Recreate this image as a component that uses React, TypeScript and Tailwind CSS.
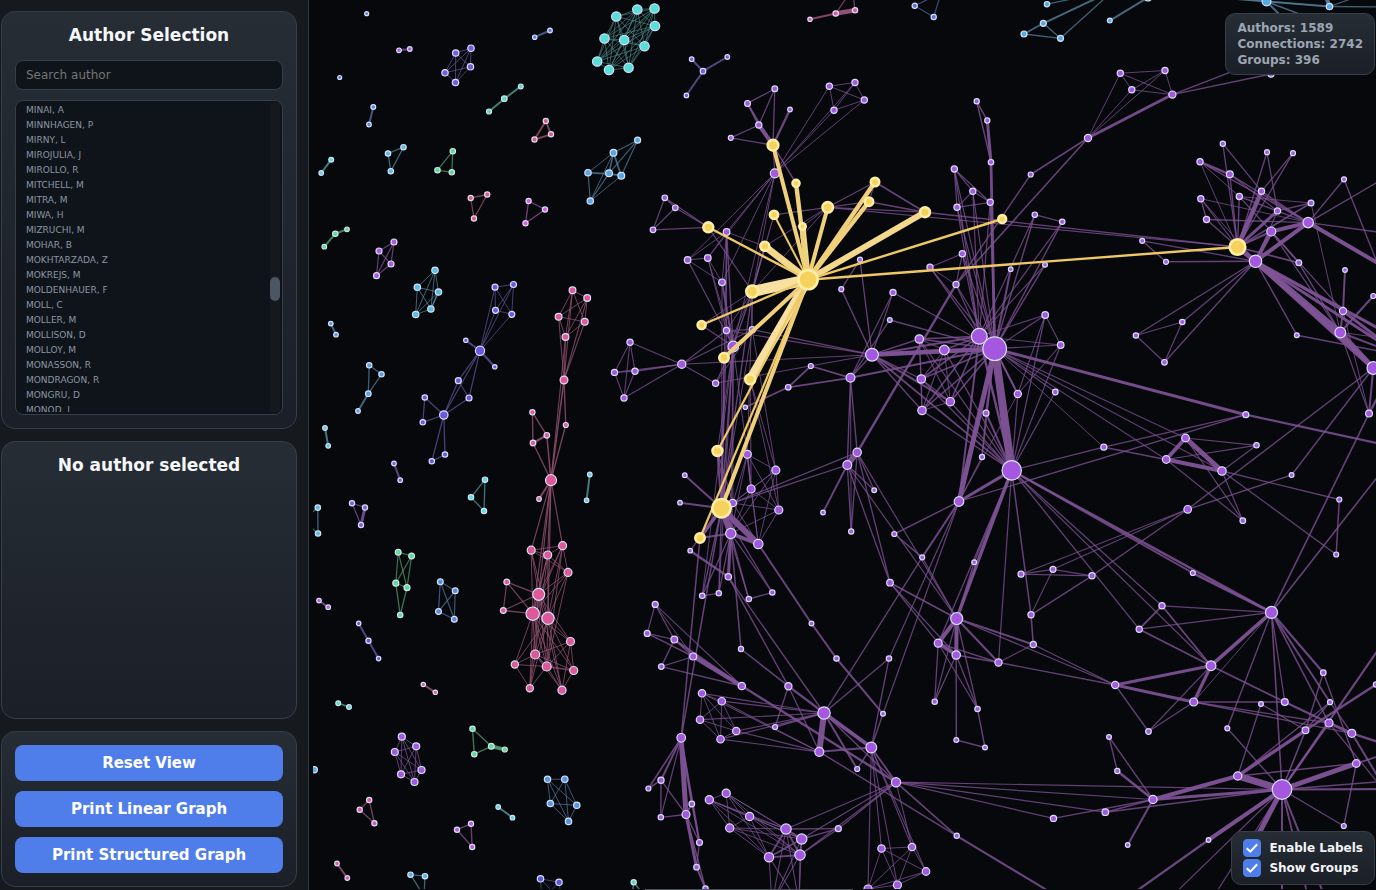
import { useEffect, useRef, useState } from 'react'

type GraphNode = [x: number, y: number, r: number]
type GraphLink = [from: number, to: number, width?: number]
type Group = { hue: number; nodes: GraphNode[]; links: GraphLink[] }

const ROW_HEIGHT = 15
const TOTAL_AUTHORS = 1589
const FIRST_ROW = 960
const THUMB_HEIGHT = 24

const authors = [
  'MINAI, A', 'MINNHAGEN, P', 'MIRNY, L', 'MIROJULIA, J', 'MIROLLO, R', 'MITCHELL, M', 'MITRA, M',
  'MIWA, H', 'MIZRUCHI, M', 'MOHAR, B', 'MOKHTARZADA, Z', 'MOKREJS, M', 'MOLDENHAUER, F', 'MOLL, C',
  'MOLLER, M', 'MOLLISON, D', 'MOLLOY, M', 'MONASSON, R', 'MONDRAGON, R', 'MONGRU, D', 'MONOD, J',
]

// every node of the list linked with every other one
const mesh = (ids: number[], width = 1): GraphLink[] =>
  ids.flatMap((a, i) => ids.slice(i + 1).map((b): GraphLink => [a, b, width]))

// every node of the first list linked with every node of the second one
const cross = (from: number[], to: number[], width = 1): GraphLink[] =>
  from.flatMap((a) => to.map((b): GraphLink => [a, b, width]))

const range = (from: number, to: number) => Array.from({ length: to - from + 1 }, (_, i) => from + i)

const smallGroups: Group[] = [
  { hue: 220, nodes: [[366.7, 13.7, 2]], links: [] },
  { hue: 225, nodes: [[339.7, 77.5, 2]], links: [] },
  { hue: 280, nodes: [[399, 50.3, 2.3], [409.8, 49, 2.3]], links: [[0, 1, 2]] },
  { hue: 222, nodes: [[534.7, 37.2, 2.2], [550, 30.5, 2.3]], links: [[0, 1, 2]] },
  { hue: 255, nodes: [[455.7, 53, 3.2], [471, 48.2, 3.2], [470.5, 66.8, 3.2], [445, 72.8, 3.2], [455.5, 82.5, 3.2]], links: mesh(range(0, 4)) },
  { hue: 220, nodes: [[373.3, 107, 2.4], [369, 124.5, 2.3]], links: [[0, 1, 2]] },
  { hue: 162, nodes: [[489, 111.5, 2.5], [504.3, 98.7, 2.8], [520.8, 86.4, 2.4]], links: [[0, 1, 2], [1, 2, 2]] },
  { hue: 342, nodes: [[545.8, 121, 2.6], [551, 134.3, 2.6], [534.5, 139.5, 2.6]], links: mesh([0, 1, 2], 1.9) },
  { hue: 182, nodes: [[331.2, 159.7, 2.4], [321.2, 173, 2.3]], links: [[0, 1, 2]] },
  { hue: 195, nodes: [[388, 153.5, 2.7], [403.5, 147.2, 2.7], [390.8, 171.2, 2.7]], links: mesh([0, 1, 2], 1.3) },
  { hue: 140, nodes: [[452.8, 151.2, 2.7], [437.5, 170.2, 2.7], [451.8, 172.3, 2.7]], links: mesh([0, 1, 2], 1.3) },
  { hue: 345, nodes: [[470.7, 198, 2.6], [487.2, 194.5, 2.6], [474, 218.5, 2.6]], links: mesh([0, 1, 2], 1.3) },
  { hue: 302, nodes: [[528.6, 201, 2.6], [545, 209.5, 2.6], [525.5, 223.3, 2.6]], links: mesh([0, 1, 2], 1.3) },
  { hue: 140, nodes: [[324.3, 246.7, 2.3], [335.3, 233.8, 2.7], [347, 229.3, 2.3]], links: [[0, 1, 2], [1, 2, 2]] },
  { hue: 280, nodes: [[379, 251, 3], [394, 242, 3], [391, 264, 3], [376.5, 275.7, 3]], links: mesh(range(0, 3), 1.2) },
  { hue: 195, nodes: [[435, 270.3, 3.2], [417.3, 287.3, 3.2], [438.5, 292, 3.2], [415.7, 314.5, 3.2], [430.9, 309, 3.2]], links: [...mesh(range(0, 4)), [2, 4, 1.6]] },
  {
    hue: 248,
    nodes: [
      [495, 287.2, 3], [513.5, 284.5, 3], [495.5, 310.3, 3], [511.8, 314.3, 3], [480, 350.7, 4.6], [465.8, 340.3, 2.2], [494.8, 366.8, 2.2],
      [458.3, 380.7, 3], [469, 398, 3], [443.8, 415, 4.2], [424.8, 397.5, 2.7], [422.8, 422.3, 2.7], [431.8, 461.3, 2.7], [445, 454.5, 2.7],
    ],
    links: [
      ...mesh(range(0, 3)), ...cross([4], [0, 1, 2, 3]), [4, 5, 2], [4, 6, 2], [4, 7, 1.2], [4, 8, 1.2], [4, 9, 1.2], [7, 8, 1.2],
      [7, 9, 1.2], [8, 9, 1.2], [9, 10, 1.3], [9, 11, 1.3], [10, 11, 1.3], [9, 12, 1.3], [9, 13, 1.3], [12, 13, 1.3],
    ],
  },
  { hue: 210, nodes: [[330.8, 323.6, 2.3], [336, 334.7, 2.3]], links: [[0, 1, 2]] },
  { hue: 208, nodes: [[369.2, 365.3, 2.7], [381.5, 374.3, 2.7], [368.3, 393.7, 2.8], [358, 411, 2.3]], links: [[0, 1, 1.3], [0, 2, 1.3], [1, 2, 1.3], [2, 3, 2]] },
  { hue: 188, nodes: [[325, 428, 2.3], [328.2, 445.8, 2.3]], links: [[0, 1, 2]] },
  { hue: 262, nodes: [[394, 463.5, 2.3], [400.2, 480.2, 2.3]], links: [[0, 1, 2]] },
  { hue: 180, nodes: [[485, 479.7, 2.7], [471, 497.3, 2.7], [484, 511, 2.7]], links: mesh([0, 1, 2], 1.3) },
  { hue: 265, nodes: [[352, 503.2, 2.6], [365, 507.5, 2.6], [361, 525, 2.6]], links: [[0, 1, 1.3], [0, 2, 1.3], [1, 2, 3]] },
  { hue: 195, nodes: [[317.8, 507.6, 2.7], [318, 533.5, 2.7], [303, 520, 2.7]], links: mesh([0, 1, 2], 1.3) },
  { hue: 185, nodes: [[589.8, 474.5, 2.3], [586.6, 500.3, 2.3]], links: [[0, 1, 2]] },
  { hue: 142, nodes: [[398.2, 552.2, 2.9], [411.6, 556, 2.9], [395.8, 583.2, 3], [407, 587.7, 3], [400.2, 615, 2.7]], links: [...mesh(range(0, 3), 1.2), [2, 4, 1.3], [3, 4, 1.3]] },
  { hue: 218, nodes: [[440.3, 581.7, 2.9], [455.2, 590.8, 2.9], [438.5, 611.5, 2.9], [454.3, 619.3, 2.9]], links: mesh(range(0, 3), 1.2) },
  { hue: 290, nodes: [[319, 600.6, 2.3], [328.2, 607.2, 2.3]], links: [[0, 1, 2]] },
  { hue: 250, nodes: [[358.7, 623.4, 2.2], [368.5, 640.7, 2.6], [378.6, 658.6, 2.2]], links: [[0, 1, 2], [1, 2, 2]] },
  { hue: 330, nodes: [[423.3, 684.5, 2.2], [435.3, 692.3, 2.2]], links: [[0, 1, 2]] },
  { hue: 165, nodes: [[338.2, 703.2, 2.4], [349, 707, 2.4]], links: [[0, 1, 1.8]] },
  { hue: 142, nodes: [[472.5, 728.8, 2.7], [474.3, 754.2, 2.7], [491.3, 746.3, 2.9], [504.8, 749.5, 2.5]], links: [[0, 1, 1.4], [0, 2, 1.4], [1, 2, 1.4], [2, 3, 3.8]] },
  { hue: 275, nodes: [[401.8, 736.7, 3.5], [416.2, 746.3, 3.5], [394.8, 752, 3.5], [421.5, 770, 3.5], [401, 774.3, 3.5], [414.5, 782, 3.5]], links: mesh(range(0, 5)) },
  { hue: 200, nodes: [[314.3, 769.7, 3.1]], links: [] },
  { hue: 325, nodes: [[369.2, 800, 2.6], [359.7, 809.8, 2.6], [374.4, 823.2, 2.6]], links: mesh([0, 1, 2], 1.3) },
  { hue: 288, nodes: [[471, 823.8, 2.6], [457, 829.7, 2.6], [472.2, 847, 2.6]], links: mesh([0, 1, 2], 1.3) },
  { hue: 185, nodes: [[498.2, 807, 2.3], [512.5, 817.7, 2.3]], links: [[0, 1, 2]] },
  { hue: 212, nodes: [[547.5, 779.3, 3.2], [564.8, 779.2, 3.2], [550.3, 803.5, 3.2], [576.8, 805.3, 3.2], [568.5, 821.4, 3.2]], links: mesh(range(0, 4)) },
  { hue: 330, nodes: [[337, 863.5, 2.3], [347.3, 878, 2.3]], links: [[0, 1, 2]] },
  { hue: 200, nodes: [[410.5, 874.7, 2.7], [425, 876.2, 2.7], [424, 896, 2.7]], links: mesh([0, 1, 2], 1.3) },
  { hue: 240, nodes: [[540.5, 878.8, 3.2], [559, 882.3, 3.2], [542, 900, 3.2], [562, 902, 3.2]], links: mesh(range(0, 3)) },
  { hue: 160, nodes: [[633.7, 882.3, 2.6], [632, 897, 2.6], [643, 894, 2.6]], links: mesh([0, 1, 2], 1.4) },
  {
    hue: 177,
    nodes: [
      [616.3, 16.5, 4.7], [637.3, 9.5, 4.7], [654.5, 8.5, 4.7], [655, 26, 4.7], [604.5, 38.5, 4.7],
      [624.2, 40, 4.7], [644.5, 46.3, 4.7], [597.2, 61.5, 4.7], [609, 70, 4.7], [628.6, 67.8, 4.7],
    ],
    links: mesh(range(0, 9), 0.8),
  },
  {
    hue: 205,
    nodes: [[613.5, 152.7, 3.4], [637.6, 140.2, 3], [588, 172.7, 3.2], [609, 173.3, 3.4], [621.3, 175.7, 3.4], [590.3, 201, 3.2]],
    links: [[0, 1, 1.2], [0, 2], [0, 3, 1.6], [0, 4, 1.8], [0, 5], [1, 3, 1.2], [1, 4, 1.2], [2, 3, 1.2], [2, 4], [2, 5, 1.2], [3, 4, 1.6], [3, 5, 1.2], [4, 5]],
  },
  { hue: 255, nodes: [[703, 71.2, 2.8], [691.7, 59.2, 2.3], [727.3, 57, 2.3], [686.4, 95.4, 2.3]], links: cross([0], [1, 2, 3], 2) },
  { hue: 325, nodes: [[810, 19.3, 2.2], [835.7, 13.5, 2.7], [855, 10.3, 2.7], [852.5, -11, 2.7]], links: [[0, 1, 2], [1, 2, 4.5], [1, 3, 1.3], [2, 3, 1.3]] },
  { hue: 228, nodes: [[914.7, 5.8, 2.6], [933.7, 17, 2.6], [941, -7, 2.6]], links: mesh([0, 1, 2], 1.2) },
  {
    hue: 203,
    nodes: [
      [1047, 4.2, 2.7], [1043.3, 23.3, 3], [1024, 34, 3], [1060.5, 38.3, 3], [1109.8, 20.6, 2.4], [1148, -2.5, 3.5], [1266.5, 1.5, 4.4],
      [1329.5, 6.5, 3.2], [1114, -10, 3], [1190, -5, 3], [1290, 25, 3], [1310, 18, 3], [1400, 7, 3], [1324, -9, 3], [1362, -5, 3],
    ],
    links: [
      [0, 8, 1.3], [1, 8, 2], [1, 2, 1.8], [1, 3, 1.3], [2, 3, 1.3], [3, 8, 1.3], [4, 5, 2], [6, 9, 2], [6, 7, 2], [6, 10, 2],
      [6, 11, 1.5], [7, 12, 1.3], [7, 13, 4], [7, 14, 1.2], [7, 9, 1.2],
    ],
  },
  {
    hue: 331,
    nodes: [
      [572.5, 290.3, 3.4], [587.2, 298, 3.4], [558.6, 316.7, 3.4], [584.8, 321.8, 3.4], [565.5, 337, 3.4], [564, 380, 3.9], [565.8, 425, 2.5],
      [532.4, 412.3, 2.6], [546.8, 435.3, 2.8], [533, 443, 2.8], [551, 480.2, 5.5], [539, 499, 2.3], [531.2, 550.2, 4], [547.7, 555, 4],
      [562.6, 545.7, 4], [568, 572.4, 4], [538.7, 594.3, 6], [532.7, 613.7, 6.7], [548, 618.3, 6.1], [506.8, 582, 2.9], [503.3, 610.5, 2.9],
      [570.5, 641.5, 4], [535.2, 654.5, 4.5], [546.7, 666.5, 4.5], [514.8, 664.5, 3.6], [573.7, 670.5, 4], [529.8, 688.3, 3.6], [562, 690.3, 4.1],
    ],
    links: [
      ...mesh(range(0, 4)), ...cross([5], [0, 1, 2, 3, 4], 1.1), [5, 10, 1.6], [4, 10, 1.1], [5, 6, 1.4], [6, 10, 1.4], [7, 8, 1.4], [7, 9, 1.4],
      [8, 9, 2.2], [8, 10, 1.6], [9, 10, 1.4], [10, 11, 2], ...cross([10], [12, 13, 14, 16, 17, 18], 1.2), ...mesh(range(12, 18)),
      [19, 16, 1.3], [19, 17, 1.2], [19, 20, 1.2], [20, 16, 1.2], [20, 17, 1.3], ...cross([16, 17, 18], [22, 23, 27]),
      ...cross([17, 18], [21, 24, 25, 26]), [21, 22], [21, 25], [22, 23, 1.4], [22, 24], [23, 24], [23, 25, 1.3], [24, 26], [25, 27],
      [26, 22], [26, 23], [21, 23], [22, 25], [22, 27], [23, 27], [15, 23], [21, 27], [16, 26], [16, 21], [13, 22], [14, 23],
    ],
  },
]

const mainNodes: GraphNode[] = [
  // 0
  [774.8, 88.8, 2.9], [747.5, 103.4, 2.9], [790, 109.5, 2.3], [758.8, 125, 3.1], [730.8, 137.8, 2.5],
  [829.3, 86.2, 3.1], [855, 82.5, 3.1], [864.3, 100, 3.1], [834, 110.2, 3.1], [774.8, 173.3, 4.5],
  // 10
  [664.8, 197.8, 2.8], [675.3, 207.8, 2.8], [653, 229.8, 2.8], [726.6, 232, 3.3], [687.6, 260, 3.3],
  [707.8, 258, 3.3], [722, 282.3, 3.3], [860, 259.7, 2.5], [841.3, 289.2, 2.5], [893, 292.4, 3.1],
  // 20
  [930, 267.3, 3.1], [962.3, 253.8, 3.1], [956, 284.5, 3.1], [976.7, 101.3, 2.6], [987.3, 120.5, 2.6],
  [991, 162.2, 2.7], [954.3, 169, 3.1], [972.8, 191.2, 3.1], [957, 207.3, 3.1], [990.2, 202.3, 3.1],
  // 30
  [1120.3, 73.2, 3.1], [1165, 70.5, 3.1], [1131.8, 89.8, 3.1], [1172.4, 94.6, 3.6], [1088, 138, 3.6],
  [1030.7, 174.5, 2.5], [1034.8, 214.7, 2.7], [1062.2, 221.8, 2.7], [1010.7, 269.2, 2.3], [1045, 264.8, 2.4],
  // 40
  [1142.2, 240.8, 2.5], [1166, 261.8, 2.5], [1222.8, 143.7, 2.6], [1200, 161.8, 3.1], [1229.8, 174.3, 3.4],
  [1267, 152.2, 2.5], [1293, 153.2, 2.5], [1200.8, 198.7, 3.1], [1239.3, 196.5, 3.1], [1261.5, 191.3, 3.1],
  // 50
  [1206.5, 219.5, 3.1], [1277.5, 210.9, 3.1], [1311, 203, 2.9], [1271.3, 231.5, 4.5], [1308.2, 222.6, 5.2],
  [1298.8, 262.8, 2.9], [1255.5, 261.3, 6.2], [1344, 179.3, 2.5], [1345, 270, 2.3], [1373.3, 296, 2.5],
  // 60
  [1271, 74, 3.1], [630, 342.2, 3.1], [614.5, 372.4, 3.1], [635, 371.2, 3.1], [624, 398, 3.1],
  [681.8, 364.3, 4.1], [726.4, 330.5, 3.1], [752.3, 329.7, 3.1], [733.2, 346.5, 5.3], [715.6, 383.3, 3.1],
  // 70
  [745.3, 407.3, 2.2], [788.2, 387.3, 2.8], [810.8, 366, 2.5], [850.5, 377.8, 4.4], [872, 354.7, 6.4],
  [889.8, 320, 2.4], [919.3, 339, 4.2], [944.3, 350, 4.8], [921.3, 379, 4.2], [922, 410.5, 4.2],
  // 80
  [950.3, 401.7, 4.2], [979.3, 336.3, 7.9], [994.7, 348.7, 11.8], [986, 413.2, 3], [982, 457, 2.6],
  [857.2, 452.3, 4.2], [847.3, 465, 4.4], [874.2, 490.3, 2.4], [823, 512.5, 2.3], [851.2, 531.5, 2.6],
  // 90
  [747.3, 454.3, 4], [775.8, 470.2, 4], [751.1, 489, 4], [778.8, 510, 4], [732.8, 503, 3.7],
  [730.8, 533.5, 5.1], [758.3, 544, 4.7], [684.8, 475.2, 2.3], [680, 502.7, 2.3], [690.2, 550.7, 2.3],
  // 100
  [728.3, 576.8, 3.2], [702.2, 595.8, 2.7], [718.8, 593.3, 2.7], [748.8, 599, 2.7], [772.3, 592.5, 2.7],
  [959, 501.5, 4.8], [894.3, 534, 2.5], [922.2, 557.3, 2.5], [890, 582.7, 3.3], [974.2, 562.3, 2.4],
  // 110
  [1045.2, 315, 3.3], [1060.7, 345, 3.3], [1017.8, 394, 3.6], [1055.3, 392, 2.8], [1011.7, 470.4, 9.7],
  [1103.8, 447.2, 3], [1135.9, 335.5, 2.7], [1182.3, 322, 2.7], [1164.5, 362.3, 2.8], [1296.8, 335.2, 2.4],
  // 120
  [1343, 311, 3.6], [1340.3, 332.5, 5.4], [1373.3, 368, 6.3], [1369, 413.6, 3.4], [1245.8, 414.7, 3],
  [1185.5, 438, 3.8], [1166.2, 459.5, 3.8], [1222, 471, 4.2], [1256.5, 445.3, 2.7], [1291.6, 475, 2.4],
  // 130
  [1187.7, 509.3, 3.8], [1242.8, 520.7, 2.8], [1339.3, 499.5, 2.5], [1336.2, 554.5, 2.5], [1021, 574.2, 3],
  [1053, 569.3, 3], [1092, 575.8, 3.1], [1192.8, 573, 2.5], [655.2, 604.4, 3], [647.2, 633.4, 3],
  // 140
  [674.3, 639.6, 3.4], [661.3, 666.6, 2.8], [693.2, 656.5, 3.5], [741.8, 686, 3.7], [741, 649, 2.6],
  [811.5, 623.5, 2.4], [836.5, 658.5, 2.7], [889, 658.5, 2.7], [883, 713.8, 2.4], [788.4, 686.2, 3.6],
  // 150
  [702, 693.3, 3.7], [721.8, 701.2, 3.7], [700, 719.7, 3.7], [736.2, 731, 3.7], [720.5, 739.2, 3.7],
  [775.1, 727, 2.5], [824, 713, 6.2], [819.3, 751.8, 4.5], [871.3, 747.5, 5.4], [857.2, 769, 2.5],
  // 160
  [896, 782.2, 4.6], [681.2, 737.8, 4.3], [648.4, 788.5, 2.5], [661, 780.2, 3.1], [660.8, 817.3, 2.7],
  [686, 814.5, 4], [691.8, 804, 2.8], [699.5, 842.5, 3], [696.5, 867.2, 2.8], [705.5, 888.5, 2.7],
  // 170
  [709.3, 799.8, 4.1], [726.2, 793.2, 4.1], [749.6, 816.5, 4.1], [729.7, 828, 4.1], [786, 829, 5.2],
  [801.7, 839, 5.2], [769, 857.3, 4.6], [800, 855, 5.2], [838.3, 828.7, 3], [881.5, 848.5, 3.7],
  // 180
  [912, 847, 3.7], [926, 871.5, 3.8], [897.4, 885, 4], [868, 889, 4], [956.7, 835.8, 2.6],
  [956.7, 618.5, 6], [938.2, 643.2, 4], [956.2, 655, 4.2], [998.5, 662.5, 3.6], [934.7, 701.7, 2.7],
  // 190
  [977.5, 709, 2.7], [956.3, 740, 2.4], [985, 747.5, 2.4], [1031, 614.8, 3.1], [1033.3, 644.5, 3.1],
  [1115.2, 685, 3.6], [1139.2, 629.2, 3.1], [1162, 605.8, 3.1], [1271.5, 612.4, 6], [1211, 665.7, 4.9],
  // 200
  [1193.7, 702, 4], [1148.5, 731.5, 2.8], [1109, 737, 2.4], [1117.3, 771, 2.6], [1153, 799.5, 4.1],
  [1105.3, 812.2, 3.3], [1053.5, 818.4, 3.1], [1127.7, 845, 2.3], [1208.5, 840, 2.3], [1237.7, 776, 4.1],
  // 210
  [1282, 789.5, 9.8], [1227.3, 728.3, 2.5], [1261, 704, 2.4], [1284.8, 702, 3.4], [1323.3, 672.7, 2.8],
  [1330, 702.2, 2.5], [1305.5, 730.3, 3.4], [1329, 723, 4], [1351.8, 733.3, 4], [1356.3, 763.5, 3.8],
  // 220
  [1343.8, 826, 2.5], [1376, 684.5, 2.6], [808, 279.7, 10], [773, 145.2, 5.7], [796, 183.3, 3.9],
  [774, 214.8, 4.5], [827.7, 207.3, 5.6], [802.5, 226.5, 3.6], [764.8, 246.3, 4.9], [708.3, 227.3, 5.3],
  // 230
  [752.3, 291.5, 6.4], [875, 182, 4.6], [869, 201.7, 4.6], [925, 212.2, 5.3], [1002.2, 219, 4.3],
  [1237.5, 247, 8.2], [701.6, 325, 4.4], [724, 357.7, 5.1], [750.2, 379.2, 5.4], [717.4, 451, 5.3],
  // 240
  [721.5, 508.2, 9.6], [700, 538, 5.1], [1400, 448, 3], [1400, 276, 3], [1400, 169, 3],
  [1400, 235, 3], [1390, 295, 3], [1300, 45, 3], [1400, 355, 3], [1400, 340, 3],
  // 250
  [772, 903, 3], [799, 903, 3], [1060, 898, 3], [1400, 749, 3], [1392, 800, 3],
  [1400, 789, 3], [1400, 780, 3], [1400, 618, 3], [1128, 897, 3], [1165, 903, 3],
  // 260
  [1245, 860, 3], [1205, 910, 3], [1282, 905, 3], [1310, 905, 3], [1328, 905, 3],
]

const mainLinks: GraphLink[] = [
  [0, 1, 1.3], [0, 3, 1.3], [0, 223, 1.3], [1, 3, 2], [3, 223, 4], [2, 223, 2.2], [4, 3, 1.3], [4, 223, 1.3], [1, 223, 1.3],
  ...mesh([5, 6, 7, 8]), ...cross([9], [5, 6, 7, 8]), [223, 224, 1.5], [223, 9, 1.2],
  ...cross([9], [13, 14, 15, 16, 68, 230]),
  ...mesh([10, 11, 12], 1.2), ...cross([229], [10, 11, 12], 1.2), [229, 230, 1.2],
  ...mesh([13, 14, 15, 16]), [13, 228], [13, 66, 1.2], [13, 68, 1.4], [14, 68, 1.2], [15, 68], [16, 68, 2], [15, 66], [16, 240],
  [230, 225, 1.2], [230, 226], [230, 228, 1.6], [228, 226], [225, 226, 1.2], [226, 231, 1.2], [226, 233, 1.2], [226, 232, 1.2],
  [231, 233, 1.6], [232, 233, 1.6], [231, 232, 1.2], [227, 226], [230, 67], [230, 66], [230, 68, 1.4], [230, 236],
  [233, 235, 1.4], [226, 235, 1.2],
  [17, 18, 1.3], [17, 74, 1.3], [18, 74, 1.4], [19, 74, 1.2], [19, 73, 1.2], [19, 82, 1.2], [75, 73, 1.3], [75, 82, 1.3],
  [20, 21, 1.2], [20, 22], [21, 22, 1.2], [22, 85, 2.4], [34, 22, 1.6], [35, 22, 1.4], [35, 34, 1.6],
  ...cross([34], [30, 31, 32]), [34, 33, 2.8], ...mesh([30, 31, 32, 33]), [33, 60, 1.4], [33, 247, 1.4],
  [23, 24, 1.5], [23, 25, 1.5], [24, 25, 3], [25, 82, 2.8], ...mesh([26, 27, 28, 29], 1.2),
  ...cross([81, 82], [20, 21, 22, 26, 27, 28, 29], 1.2), [36, 37, 1.3], [36, 82, 1.4], [37, 82, 1.4], [36, 81, 1.2], [37, 81, 1.2],
  [38, 82, 2], [39, 82, 1.4], [39, 81, 1.2],
  [40, 41, 1.3], [40, 56, 1.3], [41, 56, 1.4], ...cross([56], [116, 117, 118], 1.3), ...mesh([116, 117, 118], 1.2),
  [42, 235, 1.3], [42, 49, 1.3], [43, 44, 2.4], [43, 235], [43, 54, 1.4], [43, 48], [44, 235, 1.4], [44, 54, 1.4], [44, 51, 1.2],
  [45, 235, 1.3], [45, 51, 1.3], [46, 49, 1.3], [46, 235, 1.3], [47, 235, 1.2], [47, 50, 1.4], [47, 54], [47, 56],
  [48, 235, 1.4], [48, 54, 1.4], [48, 53, 1.2], [49, 235, 4.5], [49, 54, 1.4], [50, 54, 1.3], [50, 235, 1.4], [51, 235, 3],
  [51, 56, 1.2], [52, 235, 1.6], [52, 51, 1.4], [52, 48], [52, 121], [53, 54, 4], [53, 235, 2], [53, 56, 4], [53, 55, 1.6],
  [54, 56, 4], [235, 56, 5], [55, 235, 1.8], [55, 121, 1.4], [54, 57, 1.4], [54, 243, 4], [54, 244, 1.3], [54, 245, 1.3], [57, 246, 1.4],
  [56, 121, 6], [56, 122, 5], [56, 119, 1.4], [56, 120, 1.6], [56, 248, 3], [56, 249, 3], [53, 121, 1.3], [53, 120, 1.2],
  [58, 120, 2], [59, 121, 2], [120, 121, 2], [119, 248, 1.5], [121, 122, 5], [120, 248, 3], [121, 248, 2], [121, 249, 1.2],
  [122, 130, 1.4], [122, 129, 1.4], [122, 123, 2], [121, 123, 1.2], [120, 123], [123, 198, 1.6], [242, 198, 1.6], [123, 248, 2.2],
  [124, 82, 3], [124, 242, 2.2], [124, 115, 1.2], [105, 124, 1.3], [114, 115, 1.3], [115, 126, 1.4], [115, 82],
  [125, 126, 4], [125, 127, 5], [126, 127, 4], [125, 128, 1.2], [126, 128, 1.2], [127, 128, 1.2], [125, 131, 1.2], [126, 131, 1.2],
  [127, 131, 1.2], [127, 132, 1.3], [127, 133, 1.3], [132, 133, 1.5], ...cross([82], [125, 126, 127], 1.1),
  [130, 129, 1.4], [130, 134, 1.1], [130, 135, 1.1], [130, 136, 1.4], ...mesh([134, 135, 136], 1.2), [136, 193, 1.4], [135, 193, 1.1],
  [114, 137, 2], [114, 198, 2.4], [137, 198, 2.6], [114, 199, 1.2], [114, 197, 1.3], [114, 196, 1.3], [114, 193, 1.5], [114, 188, 1.2],
  [114, 185, 3.4], [114, 186, 1.3], [114, 105, 3], ...mesh([61, 62, 63, 64], 1.1), ...cross([65], [61, 62, 64, 66, 67, 69, 74], 1.1),
  [65, 63, 1.6], [66, 67, 1.2], [66, 74, 1.2], [67, 74, 1.2], [66, 68, 1.4], [67, 68], [68, 69, 1.3], [67, 69], [69, 74, 1.1],
  [236, 68, 1.2], [237, 230],
  [70, 71, 1.8], [71, 72, 1.8], [72, 73, 1.8], [71, 73, 1.8], [73, 74, 1.4], [73, 85, 1.4], [73, 86, 1.4], [73, 82, 2], [73, 89],
  [74, 82, 4.5], [74, 81, 2], [74, 76, 1.4], [74, 77, 2.4], [74, 78, 1.3], [74, 79, 1.3], [74, 80, 2], [74, 114, 1.8],
  ...mesh([76, 77, 78, 79, 80], 1.1), ...cross([76, 77, 78, 79, 80], [81, 82], 1.6), ...cross([76, 77, 78, 79, 80], [114], 1.3),
  [81, 82, 3], [82, 114, 8], [82, 105, 5], [81, 105, 2], [82, 83, 2], [82, 84, 1.3], [83, 84, 1.3], [83, 114, 2], [81, 114, 2.4],
  ...cross([82], [110, 111, 112, 113], 1.2), [110, 111, 1.2], [110, 112, 1.1], [111, 112, 1.1], [81, 110, 1.1], [81, 111, 1.1],
  ...cross([114], [110, 111, 112, 113], 1.2), [112, 105], [84, 105, 1.2], [82, 112, 2],
  [85, 86, 6], [85, 87, 1.3], [86, 87, 1.3], [86, 88, 1.9], [86, 89, 1.3], [85, 89, 1.3], [85, 108, 1.3], [86, 108, 1.3],
  [85, 185, 1.2], [86, 185, 1.2], [85, 94, 1.3], [86, 94, 1.3], [105, 106, 1.4], [105, 107, 2], [106, 107, 1.6], [107, 156, 1.4],
  [107, 185, 1.2], [105, 147, 1.2], [105, 148, 1.2], [109, 114, 1.4], [109, 185, 1.4], [108, 185, 1.8], [108, 186, 1.3], [108, 187, 1.2],
  ...mesh([90, 91, 92, 93, 94, 95, 96]), [90, 92, 1.6], [240, 94, 3], [240, 95, 6], [240, 96, 6], [240, 97, 2], [240, 98, 2],
  [95, 96, 4], [99, 240, 1.3], [99, 100, 2.4], [95, 100, 3], [241, 240, 3.6], [241, 95, 2], [240, 101, 1.3], [240, 102, 1.3],
  [95, 101, 1.3], [95, 102, 1.3], [95, 103, 1.4], [95, 104, 1.3], [240, 104, 1.2], [101, 102, 1.3], [103, 104, 1.3], [240, 103, 1.2],
  [96, 145, 1.9], [145, 146, 2], [146, 148, 2], [95, 144, 1.5], [100, 149, 1.4], [100, 156, 1.4],
  [66, 240, 1.2], [68, 240, 1.6], [13, 240], [67, 240], [230, 240, 1.4], [239, 240, 2], [239, 95, 1.2], [239, 94, 1.2], [68, 95, 1.1],
  [68, 90, 1.1], [68, 94, 1.1], [238, 91], [67, 91], [230, 90], [241, 161, 1.5], [240, 161, 1.5], [237, 240, 1.2], [68, 239],
  [238, 93], [238, 92, 1.1], [68, 101], [68, 102],
  [144, 149, 1.5], [149, 156, 2.2], [149, 155, 1.3], [149, 157, 1.3], [155, 156, 1.6], ...mesh([150, 151, 152, 153, 154]),
  ...cross([156], [150, 151, 152, 153, 154], 1.2), ...cross([157], [151, 153, 154], 1.2), [157, 150], [156, 157, 6], [156, 158, 4],
  [156, 159, 2], [158, 159, 1.4], [157, 158, 2], [156, 160, 1.4], [156, 147, 1.3], [158, 147, 1.3], [158, 148, 1.4], [157, 184, 1.4],
  [160, 184, 1.6], [158, 160, 1.8], ...cross([158], [179, 180, 181, 182, 183], 1.1), [143, 160, 2.4], [142, 143, 4],
  [138, 139, 1.2], [138, 140, 1.2], [138, 142], [138, 143, 1.1], [139, 140, 1.2], [139, 142, 1.4], [140, 141, 1.3], [140, 142, 1.6],
  [141, 142, 1.3], [141, 143, 1.3], [140, 143, 2.2],
  [161, 162, 1.6], [161, 163, 2], [161, 164, 1.2], [161, 165, 5], [161, 166, 2], [161, 167, 2], [162, 163, 1.5], [163, 164, 1.4],
  [163, 165, 1.3], [164, 165, 1.3], [165, 166, 2], [165, 168, 3], [166, 167, 1.4], [165, 167, 1.4], [167, 168, 1.4], [168, 169, 2], [165, 169, 1.4],
  ...mesh([170, 171, 172, 173]), ...cross([170, 171, 172, 173], [174, 175, 176, 177]), ...mesh([174, 175, 176, 177], 1.8),
  ...cross([178], [174, 175, 177], 1.3), ...cross([160], [174, 175, 177, 178], 1.2), ...cross([250, 251], [174, 175, 176, 177], 1.1),
  ...mesh([179, 180, 181, 182, 183]), ...cross([160], [204, 205, 206, 210], 1.2), [160, 180, 1.1], [184, 252, 2],
  [185, 186, 4], [185, 187, 4], [186, 187, 3.6], [185, 188, 2], [187, 188, 1.6], [186, 188, 1.4], [186, 189, 1.3], [187, 189, 1.3],
  [185, 189, 1.2], [187, 191, 1.4], [185, 190, 1.3], [187, 190, 1.3], [186, 190, 1.2], [190, 192, 1.4], [191, 192, 1.4], [185, 194, 2],
  [185, 195, 1.3], [188, 194, 1.2], [188, 195, 1.3], [194, 195, 1.3], [193, 194, 1.6],
  [196, 197, 1.9], [196, 198, 1.3], [197, 198, 1.3], [196, 199, 1.8], [197, 199, 1.8], [198, 199, 3.6], [199, 200, 3.2], [198, 200],
  [195, 199, 3], [195, 200, 3], [195, 201, 1.3], [199, 201, 1.2], [200, 201, 1.2], [199, 213, 1.8], [200, 213, 1.4], [200, 217, 1.3],
  [200, 218, 1.3], [213, 217, 2.2], [198, 213, 1.3], [198, 214, 2.2], [198, 215, 1.9], [198, 211, 1.4], [198, 210, 1.6], [198, 217, 1.6],
  [210, 211, 1.4], [214, 216, 1.4], [214, 219, 1.4], [215, 209, 1.3], [215, 216, 1.4], [212, 209, 1.3], [212, 216, 1.3], [216, 209, 3.4],
  [216, 210, 1.6], [216, 221, 2.4], [217, 210, 2], [217, 218, 3], [218, 253, 2.4], [218, 254, 2], [217, 254, 1.2], [219, 210, 5],
  [219, 209, 1.5], [219, 220, 1.4], [219, 253, 1.8], [210, 220, 1.4], [210, 255, 2.2], [210, 256, 1.4], [210, 257, 2.2], [215, 218, 1.4],
  [209, 210, 7], [209, 204, 4], [204, 210, 3], [204, 205, 1.5], [204, 206, 1.4], [205, 210, 1.5], [204, 202, 1.4], [204, 203, 2.6],
  [202, 203, 1.4], [204, 207, 2], [210, 208, 4], [208, 258, 2.2], [210, 259, 1.2], [210, 260, 5], [210, 261, 1.2], [210, 262, 2],
  [210, 263, 1.8], [210, 264, 2],
]

// links of the highlighted author (node 222)
const hotLinks: GraphLink[] = [
  [222, 230, 11], [222, 238, 9], [222, 228, 7], [222, 227, 6], [222, 233, 6], [222, 223, 4], [222, 224, 4.4], [222, 226, 4],
  [222, 231, 4.4], [222, 232, 4.4], [222, 237, 4], [222, 240, 4], [222, 229, 2.4], [222, 225, 2], [222, 234, 2.4], [222, 235, 2.4],
  [222, 236, 2.2], [222, 239, 2.2], [222, 241, 2.2],
]

const hotColor = (width: number) => {
  if (width >= 9) return '#f8e0a0'
  if (width >= 6) return '#f4d88c'
  if (width >= 4) return '#f1d07c'
  return '#efc866'
}

const groups: Group[] = [...smallGroups, { hue: 274, nodes: mainNodes.slice(0, 222), links: [] }]

function Links({ nodes, links, color }: { nodes: GraphNode[]; links: GraphLink[]; color: (width: number) => string }) {
  return (
    <>
      {links.map(([a, b, width = 1], i) => (
        <line
          key={i}
          x1={nodes[a][0]}
          y1={nodes[a][1]}
          x2={nodes[b][0]}
          y2={nodes[b][1]}
          stroke={color(width)}
          strokeWidth={width}
        />
      ))}
    </>
  )
}

const linkColor = (hue: number) => (width: number) =>
  `hsl(${hue} 29% 46% / ${Math.min(0.96, 0.64 + width * 0.09)})`

function Graph() {
  return (
    <svg className="block h-full w-full" viewBox="313 0 1063 889" preserveAspectRatio="xMinYMin slice" role="img" aria-label="Coauthorship network">
      {smallGroups.map((group, i) => (
        <Links key={i} nodes={group.nodes} links={group.links} color={linkColor(group.hue)} />
      ))}
      <Links nodes={mainNodes} links={mainLinks} color={linkColor(279)} />
      {groups.map((group, g) =>
        group.nodes.map(([x, y, r], i) => (
          <circle key={`${g}-${i}`} cx={x} cy={y} r={r} fill={`hsl(${group.hue} 68% 61%)`} stroke="#d6e0f8" strokeWidth={1.2} />
        ))
      )}
      <Links nodes={mainNodes} links={hotLinks} color={hotColor} />
      {mainNodes.slice(222, 242).map(([x, y, r], i) => (
        <circle key={i} cx={x} cy={y} r={r - 0.4} fill="#f5d25c" stroke="#fdeea6" strokeWidth={2.6} />
      ))}
    </svg>
  )
}

function AuthorList({ query }: { query: string }) {
  const listRef = useRef<HTMLUListElement>(null)
  const [thumbTop, setThumbTop] = useState(0)

  const moveThumb = () => {
    const list = listRef.current
    if (!list) return
    const progress = list.scrollTop / Math.max(1, list.scrollHeight - list.clientHeight)
    setThumbTop(Math.round(progress * (list.clientHeight - THUMB_HEIGHT)))
  }

  useEffect(() => {
    if (listRef.current) listRef.current.scrollTop = FIRST_ROW * ROW_HEIGHT
    moveThumb()
  }, [])

  const shown = authors.filter((name) => name.includes(query.toUpperCase()))

  return (
    <div className="mt-2.5 flex h-[315px] overflow-hidden rounded-lg border border-[#353e4a] bg-[#0f141a] p-0.5">
      <ul ref={listRef} onScroll={moveThumb} className="h-full min-w-0 flex-1 overflow-y-auto [scrollbar-width:none]">
        <li aria-hidden="true" style={{ height: FIRST_ROW * ROW_HEIGHT }} />
        {shown.map((name) => (
          <li key={name}>
            <button type="button" className="block h-[15px] w-full px-2 text-left text-[9px] leading-[15px] text-[#8b96a5] hover:bg-[#1b222b]">
              {name}
            </button>
          </li>
        ))}
        <li aria-hidden="true" style={{ height: (TOTAL_AUTHORS - FIRST_ROW - shown.length) * ROW_HEIGHT }} />
      </ul>
      <div className="w-2.5 shrink-0 bg-[#15181c]">
        <div className="h-6 rounded-full bg-[#4b5563]" style={{ transform: `translateY(${thumbTop}px)` }} />
      </div>
    </div>
  )
}

function Toggle({ id, label }: { id: string; label: string }) {
  const [checked, setChecked] = useState(true)

  return (
    <label htmlFor={id} className="flex items-center gap-2 text-xs leading-[18px] font-bold text-[#f3f4f6]">
      <span className="relative size-[18px]">
        <input
          id={id}
          type="checkbox"
          checked={checked}
          onChange={(e) => setChecked(e.target.checked)}
          className="peer block size-[18px] appearance-none rounded-[4px] border border-[#4f7de9] bg-[#0f141a] checked:bg-[#4f7de9]"
        />
        <svg className="pointer-events-none absolute inset-0 hidden size-[18px] peer-checked:block" viewBox="0 0 18 18" fill="none" stroke="#fff" strokeWidth={2}>
          <path d="M3.7 9.2 7.3 12.6 14.2 5.2" />
        </svg>
      </span>
      {label}
    </label>
  )
}

const card = 'rounded-[14px] border border-[#353e49] bg-linear-to-b from-[#262d34] to-[#1b1f27] p-[13px]'
const floating = 'absolute right-px rounded-[10px] border border-[#353e49] bg-linear-to-b from-[#262d34] to-[#1b1f27] px-[11px]'

export default function App() {
  const [query, setQuery] = useState('')

  return (
    <div className="flex h-screen overflow-hidden bg-[#06080b] font-['DejaVu_Sans',sans-serif]">
      <aside className="flex w-[309px] shrink-0 flex-col gap-3 border-r border-[#2e3742] bg-[#161a1e] pt-[11px] pr-[11px] pb-[3px] pl-px">
        <section className={card}>
          <h2 className="text-center text-[17px] leading-5 font-bold text-[#f5f7fa]">Author Selection</h2>
          <input
            type="text"
            aria-label="Search author"
            placeholder="Search author"
            value={query}
            onChange={(e) => setQuery(e.target.value)}
            className="mt-[15px] block h-[30px] w-full rounded-lg border border-[#353e4a] bg-[#0f141a] px-2.5 text-xs text-[#e5e7eb] outline-none placeholder:text-[#757575]"
          />
          <AuthorList query={query} />
        </section>

        <section className={`${card} flex-1`}>
          <h2 className="text-center text-[17px] leading-5 font-bold text-[#f5f7fa]">No author selected</h2>
        </section>

        <section className={`${card} flex flex-col gap-2.5`}>
          {['Reset View', 'Print Linear Graph', 'Print Structured Graph'].map((label) => (
            <button key={label} type="button" className="h-9 w-full rounded-lg bg-[#4f7de9] text-[15px] font-bold text-white hover:bg-[#3f6dd8]">
              {label}
            </button>
          ))}
        </section>
      </aside>

      <main className="relative min-w-0 flex-1 pb-px pl-1">
        <Graph />

        <div className={`${floating} top-[13px] py-1.5 text-xs leading-4 font-bold text-[#9ca5b2]`}>
          <p>Authors: 1589</p>
          <p>Connections: 2742</p>
          <p>Groups: 396</p>
        </div>

        <div className={`${floating} bottom-[5px] flex flex-col gap-0.5 py-[7px]`}>
          <Toggle id="enable-labels" label="Enable Labels" />
          <Toggle id="show-groups" label="Show Groups" />
        </div>

        <div className="absolute bottom-0 left-[336px] h-px w-[208px] bg-[#4b4f5a]" />
      </main>
    </div>
  )
}
